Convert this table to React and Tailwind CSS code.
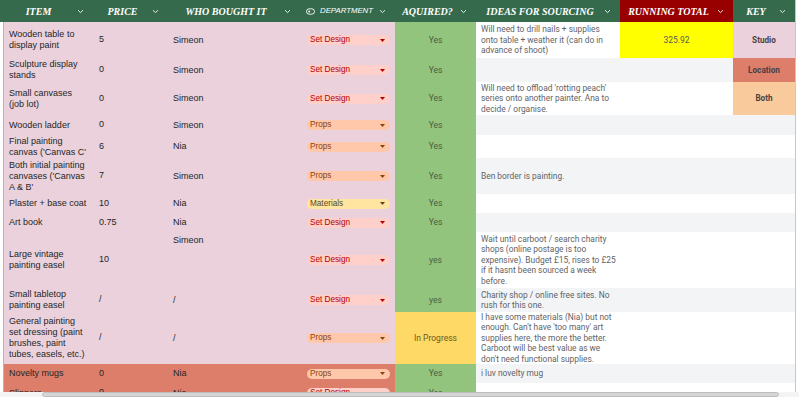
import React from "react";

const COLS = "grid-cols-[89px_75px_132px_95px_81px_144px_113px_62px]";

const headers = [
  { label: "ITEM", w: "w-[93px]" },
  { label: "PRICE", w: "w-[75px]" },
  { label: "WHO BOUGHT IT", w: "w-[132px]" },
  { label: "DEPARTMENT", w: "w-[95px]", chip: true },
  { label: "AQUIRED?", w: "w-[81px]" },
  { label: "IDEAS FOR SOURCING", w: "w-[144px]" },
  { label: "RUNNING TOTAL", w: "w-[113px]", red: true },
  { label: "KEY", w: "w-[62px]" },
];

const rows = [
  {
    h: "h-[36px]",
    item: ["Wooden table to", "display paint"],
    price: "5",
    who: "Simeon",
    dept: "Set Design",
    acq: "Yes",
    ideas: ["Will need to drill nails + supplies", "onto table + weather it (can do in", "advance of shoot)"],
    total: "325.92",
    key: "Studio",
  },
  { h: "h-[24px]", item: ["Sculpture display", "stands"], price: "0", who: "Simeon", dept: "Set Design", acq: "Yes", key: "Location" },
  {
    h: "h-[33px]",
    item: ["Small canvases", "(job lot)"],
    price: "0",
    who: "Simeon",
    dept: "Set Design",
    acq: "Yes",
    ideas: ["Will need to offload 'rotting peach'", "series onto another painter. Ana to", "decide / organise."],
    key: "Both",
  },
  { h: "h-[20px]", item: ["Wooden ladder"], price: "0", who: "Simeon", dept: "Props", acq: "Yes" },
  { h: "h-[23px]", item: ["Final painting", "canvas ('Canvas C'"], price: "6", who: "Nia", dept: "Props", acq: "Yes" },
  {
    h: "h-[36px]",
    item: ["Both initial painting", "canvases ('Canvas", "A & B'"],
    price: "7",
    who: "Simeon",
    dept: "Props",
    acq: "Yes",
    ideas: ["Ben border is painting."],
  },
  { h: "h-[19px]", item: ["Plaster + base coat"], price: "10", who: "Nia", dept: "Materials", acq: "Yes" },
  { h: "h-[19px]", item: ["Art book"], price: "0.75", who: "Nia", dept: "Set Design", acq: "Yes" },
  {
    h: "h-[56px]",
    item: ["Large vintage", "painting easel"],
    price: "10",
    who: "Simeon",
    whoTop: true,
    dept: "Set Design",
    acq: "yes",
    ideas: [
      "Wait until carboot / search charity",
      "shops (online postage is too",
      "expensive). Budget £15, rises to £25",
      "if it hasnt been sourced a week",
      "before.",
    ],
  },
  {
    h: "h-[24px]",
    item: ["Small tabletop", "painting easel"],
    price: "/",
    who: "/",
    dept: "Set Design",
    acq: "yes",
    ideas: ["Charity shop / online free sites. No", "rush for this one."],
  },
  {
    h: "h-[52px]",
    item: ["General painting", "set dressing (paint", "brushes, paint", "tubes, easels, etc.)"],
    price: "/",
    who: "/",
    dept: "Props",
    acq: "In Progress",
    ideas: [
      "I have some materials (Nia) but not",
      "enough. Can't have 'too many' art",
      "supplies here, the more the better.",
      "Carboot will be best value as we",
      "don't need functional supplies.",
    ],
  },
  { h: "h-[19px]", item: ["Novelty mugs"], price: "0", who: "Nia", dept: "Props", acq: "Yes", ideas: ["i luv novelty mug"], red: true },
  { h: "h-[20px]", item: ["Slippers"], price: "0", who: "Nia", dept: "Set Design", acq: "Yes", red: true },
];

const chipStyles = {
  "Set Design": "bg-[#ffcfc9] text-[#b10202]",
  Props: "bg-[#ffc8aa] text-[#8a4210]",
  Materials: "bg-[#ffe5a0] text-[#5a4620]",
};

const keyStyles = {
  Studio: "bg-[#ead1dc]",
  Location: "bg-[#dd7e6b]",
  Both: "bg-[#f9cb9c]",
};

const Chevron = () => (
  <svg width="7" height="5" viewBox="0 0 7 5" className="shrink-0">
    <path d="M1 1.2 L3.5 3.6 L6 1.2" fill="none" stroke="#e3ebe5" strokeWidth="1" />
  </svg>
);

const ChipIcon = () => (
  <svg width="9" height="7" viewBox="0 0 9 7" className="mr-[5px] shrink-0">
    <rect x="0.5" y="0.8" width="8" height="5.4" rx="2.7" fill="none" stroke="#fff" strokeWidth="0.9" />
    <circle cx="3.2" cy="3.5" r="1" fill="#fff" />
  </svg>
);

const Header = () => (
  <div className="flex h-[22px] bg-[#356b4c]">
    {headers.map((c) => (
      <div key={c.label} className={`${c.w} flex items-center pr-[9px] ${c.red ? "bg-[#980000]" : ""}`}>
        <div className="flex flex-1 items-center justify-center">
          {c.chip ? (
            <>
              <ChipIcon />
              <span className="font-['Liberation_Sans',sans-serif] text-[7.8px] italic text-white">{c.label}</span>
            </>
          ) : (
            <span className="font-['Liberation_Serif',serif] text-[10px] font-bold italic text-white">{c.label}</span>
          )}
        </div>
        <Chevron />
      </div>
    ))}
  </div>
);

const Chip = ({ name }) => (
  <div className={`flex h-[10px] w-full items-center justify-between rounded-full pl-[3px] pr-[5px] ${chipStyles[name]}`}>
    <span className="text-[8.2px] leading-[10px]">{name}</span>
    <svg width="5" height="3" viewBox="0 0 5 3">
      <path d="M0 0 H5 L2.5 3 Z" fill="currentColor" />
    </svg>
  </div>
);

const Row = ({ r, i }) => {
  const base = r.red ? "bg-[#dd7e6b]" : "bg-[#ead1dc]";
  const stripe = i % 2 === 0 ? "bg-white" : "bg-[#f3f4f6]";
  const acqBg = r.acq === "In Progress" ? "bg-[#ffd966] text-[#6b5a22]" : "bg-[#93c47d] text-[#4a5e3e]";
  return (
    <div className={`grid ${COLS} ${r.h} shrink-0`}>
      <div className={`${base} flex flex-col justify-center pl-[5px] font-['Liberation_Sans',sans-serif] text-[9px] leading-[11px] text-[#262626]`}>
        {r.item.map((l) => (
          <span key={l} className="whitespace-nowrap">{l}</span>
        ))}
      </div>
      <div className={`${base} flex items-center pl-[6px] font-['Liberation_Sans',sans-serif] text-[9px] text-[#262626]`}>{r.price}</div>
      <div
        className={`${base} flex ${r.whoTop ? "items-start pt-[3px]" : "items-center"} pl-[5px] font-['Liberation_Sans',sans-serif] text-[9px] leading-[11px] text-[#262626]`}
      >
        {r.who}
      </div>
      <div className={`${base} flex items-center pl-[7px] pr-[5px] font-['Liberation_Sans',sans-serif]`}>
        <Chip name={r.dept} />
      </div>
      <div className={`${acqBg} flex items-center justify-center font-['Roboto',sans-serif] text-[8.5px]`}>{r.acq}</div>
      <div className={`${stripe} flex flex-col justify-center pl-[5px] font-['Roboto',sans-serif] text-[8.4px] leading-[10.4px] text-[#5f6368]`}>
        {(r.ideas || []).map((l) => (
          <span key={l} className="whitespace-nowrap">{l}</span>
        ))}
      </div>
      <div
        className={`${r.total ? "bg-[#ffff00]" : stripe} flex items-center justify-center font-['Roboto',sans-serif] text-[8.5px] text-[#595959]`}
      >
        {r.total}
      </div>
      <div
        className={`${r.key ? keyStyles[r.key] : stripe} flex items-center justify-center font-['Roboto',sans-serif] text-[8.2px] font-bold text-[#4a3f42]`}
      >
        {r.key}
      </div>
    </div>
  );
};

export default function App() {
  return (
    <div className="relative h-[397px] w-[799px] overflow-hidden bg-white">
      <div className="w-[796px] border-r border-[#c7c7c7]">
        <Header />
        <div className="ml-[3px] flex flex-col border-l border-[#b5b5b5]">
          {rows.map((r, i) => (
            <Row key={i} r={r} i={i} />
          ))}
        </div>
      </div>
      <div className="absolute bottom-0 left-0 flex h-[5px] w-full items-center bg-[#f4f4f4] pl-[42px] pr-[20px]">
        <div className="h-[5px] flex-1 rounded-full border border-[#bdbdbd] bg-[#d6d6d6]" />
      </div>
    </div>
  );
}
